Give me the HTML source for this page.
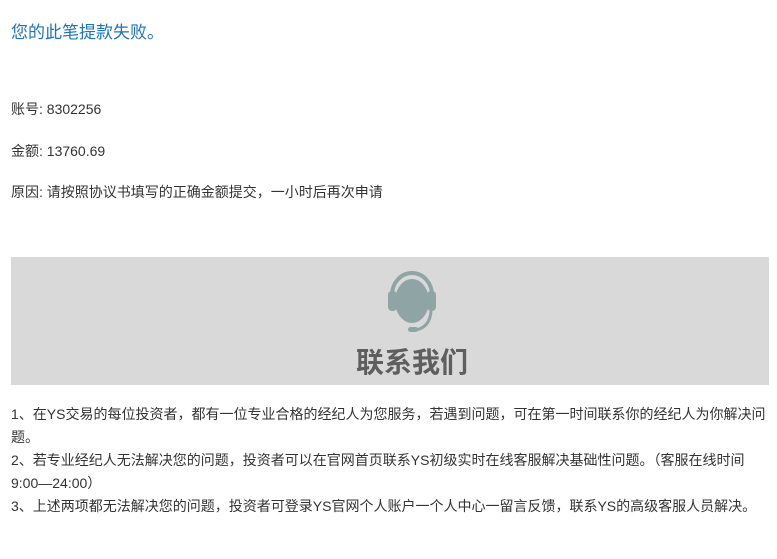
<!DOCTYPE html>
<html><head><meta charset="utf-8"><style>
html,body{margin:0;padding:0;background:#fff;width:777px;height:559px;overflow:hidden}
body{font-family:"Liberation Sans","Noto Sans CJK SC",sans-serif;color:#333;font-size:14px}
.t{position:absolute;left:11px;top:18px;font-size:17px;color:#1f74b8}
.l{position:absolute;left:11px;font-size:14px;line-height:16px}
.box{position:absolute;left:11px;top:257px;width:758px;height:128px;background:#d9d9d9}
.cap{position:absolute;left:344px;width:114px;top:84px;text-align:center;font-size:28px;font-weight:bold;color:#5e5e5e;white-space:nowrap}
.b{position:absolute;left:11px;top:403px;width:758px;font-size:14px;line-height:23px}
</style></head><body>
<div class="t">您的此笔提款失败。</div>
<div class="l" style="top:101px">账号: 8302256</div>
<div class="l" style="top:143px">金额: 13760.69</div>
<div class="l" style="top:184px">原因: 请按照协议书填写的正确金额提交，一小时后再次申请</div>
<div class="box">
<svg style="position:absolute;left:373px;top:8px" width="56" height="72" viewBox="0 0 56 72">
<path d="M8 30 A20 22 0 0 1 48 30" fill="none" stroke="#8fa5a5" stroke-width="4"/>
<rect x="4" y="26" width="9" height="20" rx="4" fill="#8fa5a5"/>
<rect x="43" y="26" width="9" height="20" rx="4" fill="#8fa5a5"/>
<ellipse cx="28" cy="36" rx="17" ry="22" fill="#8fa5a5"/>
<path d="M47 46 Q46 62 32 65" fill="none" stroke="#8fa5a5" stroke-width="3"/>
<rect x="24" y="62" width="10" height="5" rx="2.5" fill="#8fa5a5"/>
</svg>
<div class="cap">联系我们</div>
</div>
<div class="b">1、在YS交易的每位投资者，都有一位专业合格的经纪人为您服务，若遇到问题，可在第一时间联系你的经纪人为你解决问题。<br>2、若专业经纪人无法解决您的问题，投资者可以在官网首页联系YS初级实时在线客服解决基础性问题。（客服在线时间9:00—24:00）<br>3、上述两项都无法解决您的问题，投资者可登录YS官网个人账户一个人中心一留言反馈，联系YS的高级客服人员解决。</div>
</body></html>
